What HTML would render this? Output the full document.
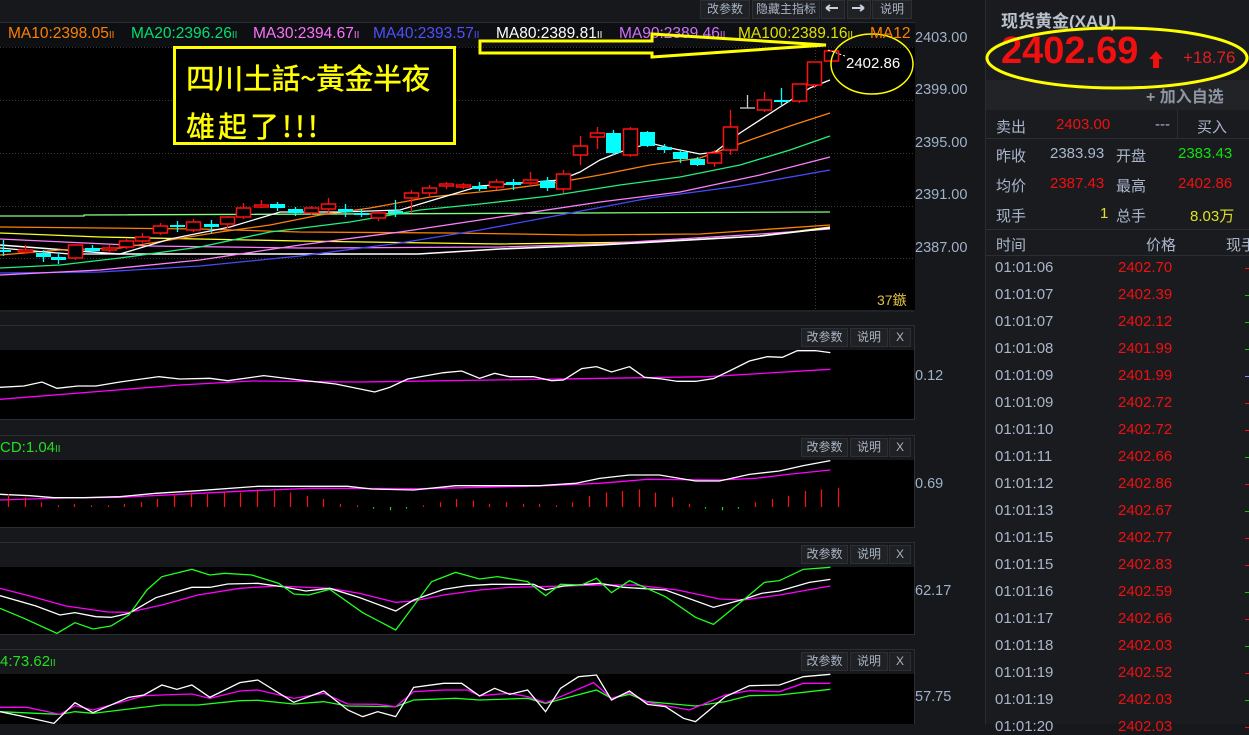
<!DOCTYPE html>
<html><head><meta charset="utf-8">
<style>
*{margin:0;padding:0;box-sizing:border-box}
body{width:1249px;height:724px;overflow:hidden;background:#17181c;font-family:"Liberation Sans","Noto Sans CJK SC",sans-serif;position:relative}
.a{position:absolute;white-space:nowrap}
.btn{position:absolute;height:19px;background:#1f2125;border:1px solid #2c2f35;color:#aab4c4;font-size:12px;line-height:17px;text-align:center}
.lbl{color:#9fb1c9;font-size:14.5px}
.rp{position:absolute;left:985px;top:0;width:264px;height:724px;background:#1a1b1f;border-left:1px solid #2a2c31}
.t{color:#a9b6cb;font-size:15px}
.r{color:#f01010;font-size:15px}
.ma{position:absolute;top:25px;font-size:15.5px;white-space:nowrap}
.ma small{font-size:10px}
</style></head><body>
<svg id="sv" class="a" style="left:0;top:0" width="985" height="724" xmlns="http://www.w3.org/2000/svg">
<rect x="0" y="22" width="915" height="25" fill="#0e0f12"/>
<rect x="0" y="47" width="915" height="263" fill="#000"/>
<line x1="0" y1="22.5" x2="915" y2="22.5" stroke="#2a2c31"/>
<g stroke="#3a3a3a" stroke-dasharray="1,2">
<line x1="0" y1="47.5" x2="915" y2="47.5"/><line x1="0" y1="100.5" x2="915" y2="100.5"/><line x1="0" y1="153.5" x2="915" y2="153.5"/><line x1="0" y1="206.5" x2="915" y2="206.5"/><line x1="0" y1="258.5" x2="915" y2="258.5"/>
<line x1="815.5" y1="47" x2="815.5" y2="310"/>
<line x1="0" y1="385.5" x2="915" y2="385.5"/><line x1="0" y1="493.5" x2="915" y2="493.5"/><line x1="0" y1="600.5" x2="915" y2="600.5"/><line x1="0" y1="707.5" x2="915" y2="707.5"/>
</g>
<rect x="0.5" y="310.5" width="914" height="1" fill="#2a2c31"/>
<g fill="#000">
<rect x="0" y="350" width="915" height="70"/><rect x="0" y="460" width="915" height="67"/><rect x="0" y="567" width="915" height="67"/><rect x="0" y="674" width="915" height="50"/>
</g>
<g fill="none" stroke="#2c2e33">
<rect x="-1" y="325.5" width="915.5" height="94"/><rect x="-1" y="435.5" width="915.5" height="92"/><rect x="-1" y="542.5" width="915.5" height="92"/><rect x="-1" y="649.5" width="915.5" height="80"/>
</g>
<g id="g"></g>
<rect x="174.5" y="47.5" width="280" height="96" fill="#000" stroke="#ffff00" stroke-width="3"/>
<ellipse cx="872" cy="64" rx="41" ry="30" fill="none" stroke="#ffff00" stroke-width="1.5"/>
<line x1="828" y1="50" x2="845" y2="56" stroke="#fff" stroke-dasharray="2,2"/>
<!-- toolbar arrows -->
<path d="M826 8h12M826 8l4-3M826 8l4 3" stroke="#c8d0dc" stroke-width="2" fill="none"/>
<path d="M852 8h12M864 8l-4-3M864 8l-4 3" stroke="#c8d0dc" stroke-width="2" fill="none"/>
</svg>
<div class="a" style="left:186px;top:56px;color:#ffff00;font-size:29px;font-family:'Noto Sans CJK TC',sans-serif;font-weight:500;letter-spacing:-0.5px">四川土話~黃金半夜</div>
<div class="a" style="left:186px;top:104px;color:#ffff00;font-size:29px;font-family:'Noto Sans CJK TC',sans-serif;font-weight:500;letter-spacing:3px">雄起了!!!</div>
<div class="a" style="left:846px;top:55px;color:#fff;font-size:15px">2402.86</div>

<div class="btn" style="left:700px;top:0;width:50px">改参数</div>
<div class="btn" style="left:752px;top:0;width:68px">隐藏主指标</div>
<div class="btn" style="left:821px;top:0;width:24px"></div>
<div class="btn" style="left:847px;top:0;width:24px"></div>
<div class="btn" style="left:872px;top:0;width:40px">说明</div>
<svg class="a" style="left:0;top:0" width="980" height="60"><path d="M826 8h12M826 8l4-3M826 8l4 3" stroke="#c8d0dc" stroke-width="2" fill="none"/><path d="M852 8h12M864 8l-4-3M864 8l-4 3" stroke="#c8d0dc" stroke-width="2" fill="none"/></svg>
<div class="ma" style="left:8px;color:#ff8000">MA10:2398.05<small>II</small></div>
<div class="ma" style="left:131px;color:#00e070">MA20:2396.26<small>II</small></div>
<div class="ma" style="left:253px;color:#ff70ff">MA30:2394.67<small>II</small></div>
<div class="ma" style="left:373px;color:#5050ff">MA40:2393.57<small>II</small></div>
<div class="ma" style="left:496px;color:#fff">MA80:2389.81<small>II</small></div>
<div class="ma" style="left:619px;color:#d070ff">MA90:2389.46<small>II</small></div>
<div class="ma" style="left:738px;color:#e0e000">MA100:2389.16<small>II</small></div>
<div class="ma" style="left:870px;color:#ff8000">MA12</div>
<svg class="a" style="left:0;top:0" width="915" height="70"><polygon points="480,41 652,41 652,34 826,45 652,57 652,53 480,53" fill="none" stroke="#ffff00" stroke-width="3"/></svg>
<div class="a lbl" style="left:915px;top:30px">2403.00</div>
<div class="a lbl" style="left:915px;top:82px">2399.00</div>
<div class="a lbl" style="left:915px;top:135px">2395.00</div>
<div class="a lbl" style="left:915px;top:187px">2391.00</div>
<div class="a lbl" style="left:915px;top:240px">2387.00</div>
<div class="a" style="left:877px;top:290px;color:#e0c040;font-size:14px">37鏃</div>
<div class="a lbl" style="left:915px;top:368px">0.12</div>
<div class="a lbl" style="left:915px;top:476px">0.69</div>
<div class="a lbl" style="left:915px;top:583px">62.17</div>
<div class="a lbl" style="left:915px;top:689px">57.75</div>
<div class="a" style="left:0;top:439px;color:#20e020;font-size:15px">CD:1.04<small style="font-size:10px">II</small></div>
<div class="a" style="left:0;top:653px;color:#20e020;font-size:15px">4:73.62<small style="font-size:10px">II</small></div>
<div class="btn" style="left:801px;top:328px;width:47px">改参数</div><div class="btn" style="left:850px;top:328px;width:38px">说明</div><div class="btn" style="left:889px;top:328px;width:22px">X</div>
<div class="btn" style="left:801px;top:438px;width:47px">改参数</div><div class="btn" style="left:850px;top:438px;width:38px">说明</div><div class="btn" style="left:889px;top:438px;width:22px">X</div>
<div class="btn" style="left:801px;top:545px;width:47px">改参数</div><div class="btn" style="left:850px;top:545px;width:38px">说明</div><div class="btn" style="left:889px;top:545px;width:22px">X</div>
<div class="btn" style="left:801px;top:652px;width:47px">改参数</div><div class="btn" style="left:850px;top:652px;width:38px">说明</div><div class="btn" style="left:889px;top:652px;width:22px">X</div>

<div class="rp">
<div class="a" style="left:15px;top:7px;color:#b9c1cd;font-size:17px;font-weight:bold">现货黄金(XAU)</div>
<div class="a" style="left:15px;top:30px;color:#f01010;font-size:38px;font-weight:bold">2402.69</div>
<svg class="a" style="left:162px;top:50px" width="16" height="20"><path d="M8 1L1 9h4v9h6V9h4z" fill="#f01010"/></svg>
<div class="a" style="left:197px;top:48px;color:#e02020;font-size:17px">+18.76</div>
<div class="a" style="left:0;top:80px;width:264px;height:30px;background:#222327"></div>
<div class="a" style="left:160px;top:83px;color:#8e96a2;font-size:16px;font-weight:bold">+ 加入自选</div>
<div class="a" style="left:0;top:110px;width:264px;height:29px;border-bottom:1px solid #2c2e33"></div>
<div class="a" style="left:191px;top:110px;width:1px;height:28px;background:#2c2e33"></div>
<div class="a t" style="left:10px;top:116px">卖出</div><div class="a r" style="left:70px;top:116px">2403.00</div><div class="a t" style="left:169px;top:116px">---</div><div class="a t" style="left:211px;top:116px">买入</div>
<div class="a t" style="left:10px;top:145px">昨收</div><div class="a t" style="left:64px;top:145px">2383.93</div><div class="a t" style="left:130px;top:145px">开盘</div><div class="a" style="left:192px;top:145px;color:#10e010;font-size:15px">2383.43</div>
<div class="a t" style="left:10px;top:175px">均价</div><div class="a r" style="left:64px;top:175px">2387.43</div><div class="a t" style="left:130px;top:175px">最高</div><div class="a r" style="left:192px;top:175px">2402.86</div>
<div class="a t" style="left:10px;top:205px">现手</div><div class="a" style="left:114px;top:205px;color:#e0e020;font-size:15px">1</div><div class="a t" style="left:130px;top:205px">总手</div><div class="a" style="left:204px;top:205px;color:#e0e020;font-size:15px">8.03万</div>
<div class="a" style="left:0;top:229px;width:264px;height:1px;background:#2c2e33"></div>
<div class="a" style="left:0;top:255px;width:264px;height:1px;background:#2c2e33"></div>
<div class="a t" style="left:10px;top:234px">时间</div><div class="a t" style="left:160px;top:234px">价格</div><div class="a t" style="left:240px;top:234px">现手</div>
<div id="list"></div>
</div>
<script>
var rows=[["06","2402.70","#f01010"],["07","2402.39","#10c010"],["07","2402.12","#10c010"],["08","2401.99","#10c010"],["09","2401.99","#8090ff"],["09","2402.72","#f01010"],["10","2402.72","#f01010"],["11","2402.66","#10c010"],["12","2402.86","#f01010"],["13","2402.67","#10c010"],["15","2402.77","#f01010"],["15","2402.83","#f01010"],["16","2402.59","#10c010"],["17","2402.66","#f01010"],["18","2402.03","#10c010"],["19","2402.52","#f01010"],["19","2402.03","#10c010"],["20","2402.03","#f01010"]];
var h="";rows.forEach(function(r,i){var y=259+i*27;h+='<div class="a t" style="left:9px;top:'+y+'px">01:01:'+r[0]+'</div><div class="a r" style="left:132px;top:'+y+'px">'+r[1]+'</div><div class="a" style="left:259px;top:'+(y+9)+'px;width:5px;height:1px;background:'+r[2]+'"></div>';});
document.getElementById("list").innerHTML=h;
var s="";
function pl(p,c,w){s+='<polyline fill="none" stroke="'+c+'" stroke-width="'+(w||1.3)+'" points="'+p.map(function(q){return q.join(",")}).join(" ")+'"/>';}
function pz(p,c,y0){pl(p.map(function(q){return[q[0]/1.668,y0+q[1]/3]}),c,1.3);}
pl([[0,216],[84,216],[84,215],[830,212]],"#80ff80");
pl([[0,227],[200,229],[300,232],[450,233],[580,235],[700,234],[830,225]],"#ff8000");
pl([[0,233],[100,237],[300,241],[500,244],[650,242],[760,236],[830,227]],"#ffff20");
pl([[0,239],[150,246],[300,248],[500,247],[600,244],[760,234],[830,229]],"#ff80ff");
pl([[0,245],[118,254],[418,254],[500,249],[600,245],[760,236],[830,228]],"#ffffff",1.6);
pl([[0,273],[100,272],[200,266],[300,256],[400,243],[480,230],[560,215],[650,198],[740,186],[830,170]],"#4848ff");
pl([[0,275],[100,270],[200,260],[300,245],[400,232],[500,217],[600,202],[680,192],[760,175],[830,157]],"#ff80ff");
pl([[0,268],[60,265],[120,258],[200,247],[270,232],[350,222],[420,210],[480,204],[550,196],[620,185],[680,177],[740,165],[790,150],[830,136]],"#20f080");
pl([[0,255],[60,250],[120,248],[170,240],[220,232],[270,225],[320,215],[370,208],[430,197],[500,190],[560,182],[600,175],[650,165],[700,158],[750,140],[790,126],[830,113]],"#ff8010");
pl([[0,248],[45,252],[70,254],[120,254],[170,239],[230,227],[280,212],[340,212],[400,210],[440,198],[480,186],[520,183],[560,180],[580,172],[600,160],[620,152],[650,143],[670,148],[700,154],[715,152],[740,133],[780,107],[810,88],[830,80]],"#ffffff");
var C=[[3,250,250,240,256,"c"],[25,250,251,245,254,"r"],[43,253,257,250,262,"c"],[58,257,260,252,264,"c"],[75,245,258,244,260,"r"],[92,248,251,245,253,"c"],[109,248,250,245,253,"r"],[126,241,247,239,249,"r"],[142,237,241,233,243,"r"],[160,226,233,223,235,"r"],[177,225,227,221,232,"c"],[193,222,230,219,232,"r"],[211,224,227,220,233,"c"],[227,217,224,216,228,"r"],[243,208,217,203,219,"r"],[261,205,207,200,208,"r"],[277,204,208,202,211,"c"],[295,209,213,207,216,"c"],[311,208,213,206,215,"r"],[328,204,209,198,213,"r"],[345,209,212,204,217,"c"],[361,213,215,209,217,"c"],[378,213,218,211,221,"r"],[395,211,211,200,217,"c"],[411,193,198,190,213,"r"],[429,188,193,185,196,"r"],[446,184,186,182,189,"r"],[463,185,186,183,189,"r"],[479,186,189,182,191,"c"],[496,182,187,179,190,"r"],[513,182,185,179,190,"c"],[530,180,183,172,186,"r"],[547,181,188,177,191,"c"],[563,174,189,170,193,"r"],[580,146,155,136,165,"r"],[597,133,137,127,149,"r"],[613,133,153,130,155,"c"],[630,129,155,127,157,"r"],[647,132,146,131,147,"c"],[664,147,150,144,153,"c"],[680,152,159,150,163,"c"],[697,159,165,157,166,"c"],[714,153,163,150,167,"r"],[730,127,150,110,155,"r"],[747,108,108,95,108,"w"],[764,100,110,92,112,"r"],[781,100,100,88,105,"c"],[799,84,101,84,103,"r"],[814,62,85,62,88,"r"],[831,51,61,50,63,"r"]];
C.forEach(function(c){var x=c[0],col=c[5]=="r"?"#ff1010":c[5]=="c"?"#00ffff":"#cccccc";
s+='<line x1="'+(x+.5)+'" y1="'+c[3]+'" x2="'+(x+.5)+'" y2="'+c[4]+'" stroke="'+col+'" stroke-width="1.3"/>';
var hh=Math.max(c[2]-c[1],2);
if(c[5]=="r")s+='<rect x="'+(x-6.5)+'" y="'+c[1]+'" width="14" height="'+hh+'" fill="#000" stroke="#ff1010" stroke-width="1.5"/>';
else if(c[5]=="c")s+='<rect x="'+(x-7)+'" y="'+c[1]+'" width="15" height="'+hh+'" fill="#00ffff"/>';
else s+='<line x1="'+(x-7)+'" y1="'+c[1]+'" x2="'+(x+8)+'" y2="'+c[1]+'" stroke="#ccc" stroke-width="1.3"/>';});
pz([[0,298],[300,255],[420,243],[600,246],[900,238],[1180,230],[1385,208]],"#ff00ff",300);
pz([[0,262],[40,258],[70,246],[95,265],[130,258],[160,258],[200,246],[265,230],[300,237],[350,235],[380,242],[440,227],[500,240],[560,252],[625,276],[650,262],[680,237],[740,218],[770,213],[800,235],[825,220],[850,230],[890,230],[920,242],[940,240],[970,206],[995,200],[1020,216],[1050,200],[1075,232],[1100,236],[1130,244],[1160,244],[1190,236],[1220,210],[1250,183],[1280,170],[1305,172],[1330,152],[1360,152],[1385,158]],"#ffffff",300);
pz([[0,600],[100,594],[200,592],[300,583],[420,572],[520,565],[700,566],[900,558],[1000,550],[1080,538],[1200,540],[1260,535],[1320,522],[1385,510]],"#ff00ff",300);
pz([[0,583],[50,587],[90,593],[140,593],[200,590],[260,580],[330,572],[430,559],[580,559],[620,567],[690,570],[760,557],[900,557],[960,550],[1000,535],[1050,525],[1100,525],[1160,543],[1200,543],[1250,523],[1300,513],[1340,497],[1385,482]],"#ffffff",300);
var H=[8,6,3,1,2,1,1,2,3,5,8,9,8,9,9,10,10,9,7,5,2,1,-1,-2,-1,1,3,5,4,2,3,2,2,1,3,7,9,10,11,9,6,2,-1,-2,-1,3,5,7,10,11,12];
H.forEach(function(v,i){var x=Math.round(8+i*16.6)+.5,yb=507;s+='<line x1="'+x+'" y1="'+yb+'" x2="'+x+'" y2="'+(v>=0?yb-v*1.6:yb+(-v)*1.6)+'" stroke="'+(v>=0?"#ff1010":"#10e010")+'" stroke-width="1.2"/>';});
pz([[0,175],[50,198],[110,228],[180,246],[215,247],[270,225],[330,195],[400,175],[460,168],[550,175],[600,190],[660,217],[690,213],[740,195],[800,180],[850,172],[900,170],[1000,165],[1060,165],[1130,180],[1200,207],[1240,210],[1300,195],[1385,168]],"#ff00ff",530);
pz([[0,197],[60,228],[100,255],[125,248],[160,260],[185,262],[215,250],[260,203],[320,172],[350,172],[380,162],[430,160],[470,170],[510,183],[550,175],[600,203],[660,243],[690,210],[740,178],[780,167],[820,163],[890,163],[910,180],[940,168],[1000,160],[1040,172],[1110,180],[1190,232],[1240,208],[1270,190],[1300,183],[1350,157],[1385,148]],"#ffffff",530);
pz([[0,235],[40,265],[95,310],[125,278],[155,297],[185,288],[215,255],[245,180],[270,140],[320,118],[350,135],[375,130],[420,135],[465,160],[490,192],[515,195],[550,178],[605,248],[660,300],[720,155],[760,127],[800,147],[830,140],[880,155],[910,197],[935,163],[970,165],[995,145],[1020,188],[1050,152],[1110,200],[1160,262],[1190,283],[1240,210],[1275,157],[1300,152],[1340,118],[1385,112]],"#20ff20",530);
pz([[0,545],[60,550],[100,553],[125,545],[155,550],[215,537],[270,525],[330,525],[400,512],[430,511],[490,522],[540,515],[580,528],[660,530],[690,510],[760,505],[800,510],[880,505],[910,520],[995,480],[1020,505],[1050,493],[1080,515],[1160,528],[1210,515],[1250,497],[1300,495],[1385,478]],"#20ff20",530);
pz([[0,532],[45,532],[100,553],[125,527],[155,540],[215,510],[240,497],[270,495],[320,492],[350,505],[400,483],[430,480],[490,505],[540,490],[580,522],[630,523],[660,530],[690,485],[740,480],[780,480],[800,497],[850,490],[880,500],[910,518],[935,500],[990,458],[1020,505],[1050,488],[1080,517],[1150,540],[1210,495],[1250,482],[1300,485],[1340,460],[1385,460]],"#ff00ff",530);
pz([[0,545],[40,560],[90,580],[125,518],[155,548],[215,502],[240,495],[270,465],[295,478],[320,465],[350,502],[400,458],[430,450],[490,517],[540,483],[580,540],[605,560],[630,545],[660,560],[690,472],[740,460],[770,460],[800,498],[825,475],[850,493],[880,480],[910,545],[935,475],[965,440],[995,435],[1020,510],[1050,483],[1080,523],[1110,530],[1140,565],[1160,575],[1210,500],[1250,467],[1300,465],[1340,440],[1385,433]],"#ffffff",530);
document.getElementById("g").innerHTML=s;
</script>
<svg class="a" style="left:980px;top:18px" width="269" height="72"><ellipse cx="137" cy="40" rx="130" ry="30" fill="none" stroke="#ffff00" stroke-width="3"/></svg>
</body></html>
